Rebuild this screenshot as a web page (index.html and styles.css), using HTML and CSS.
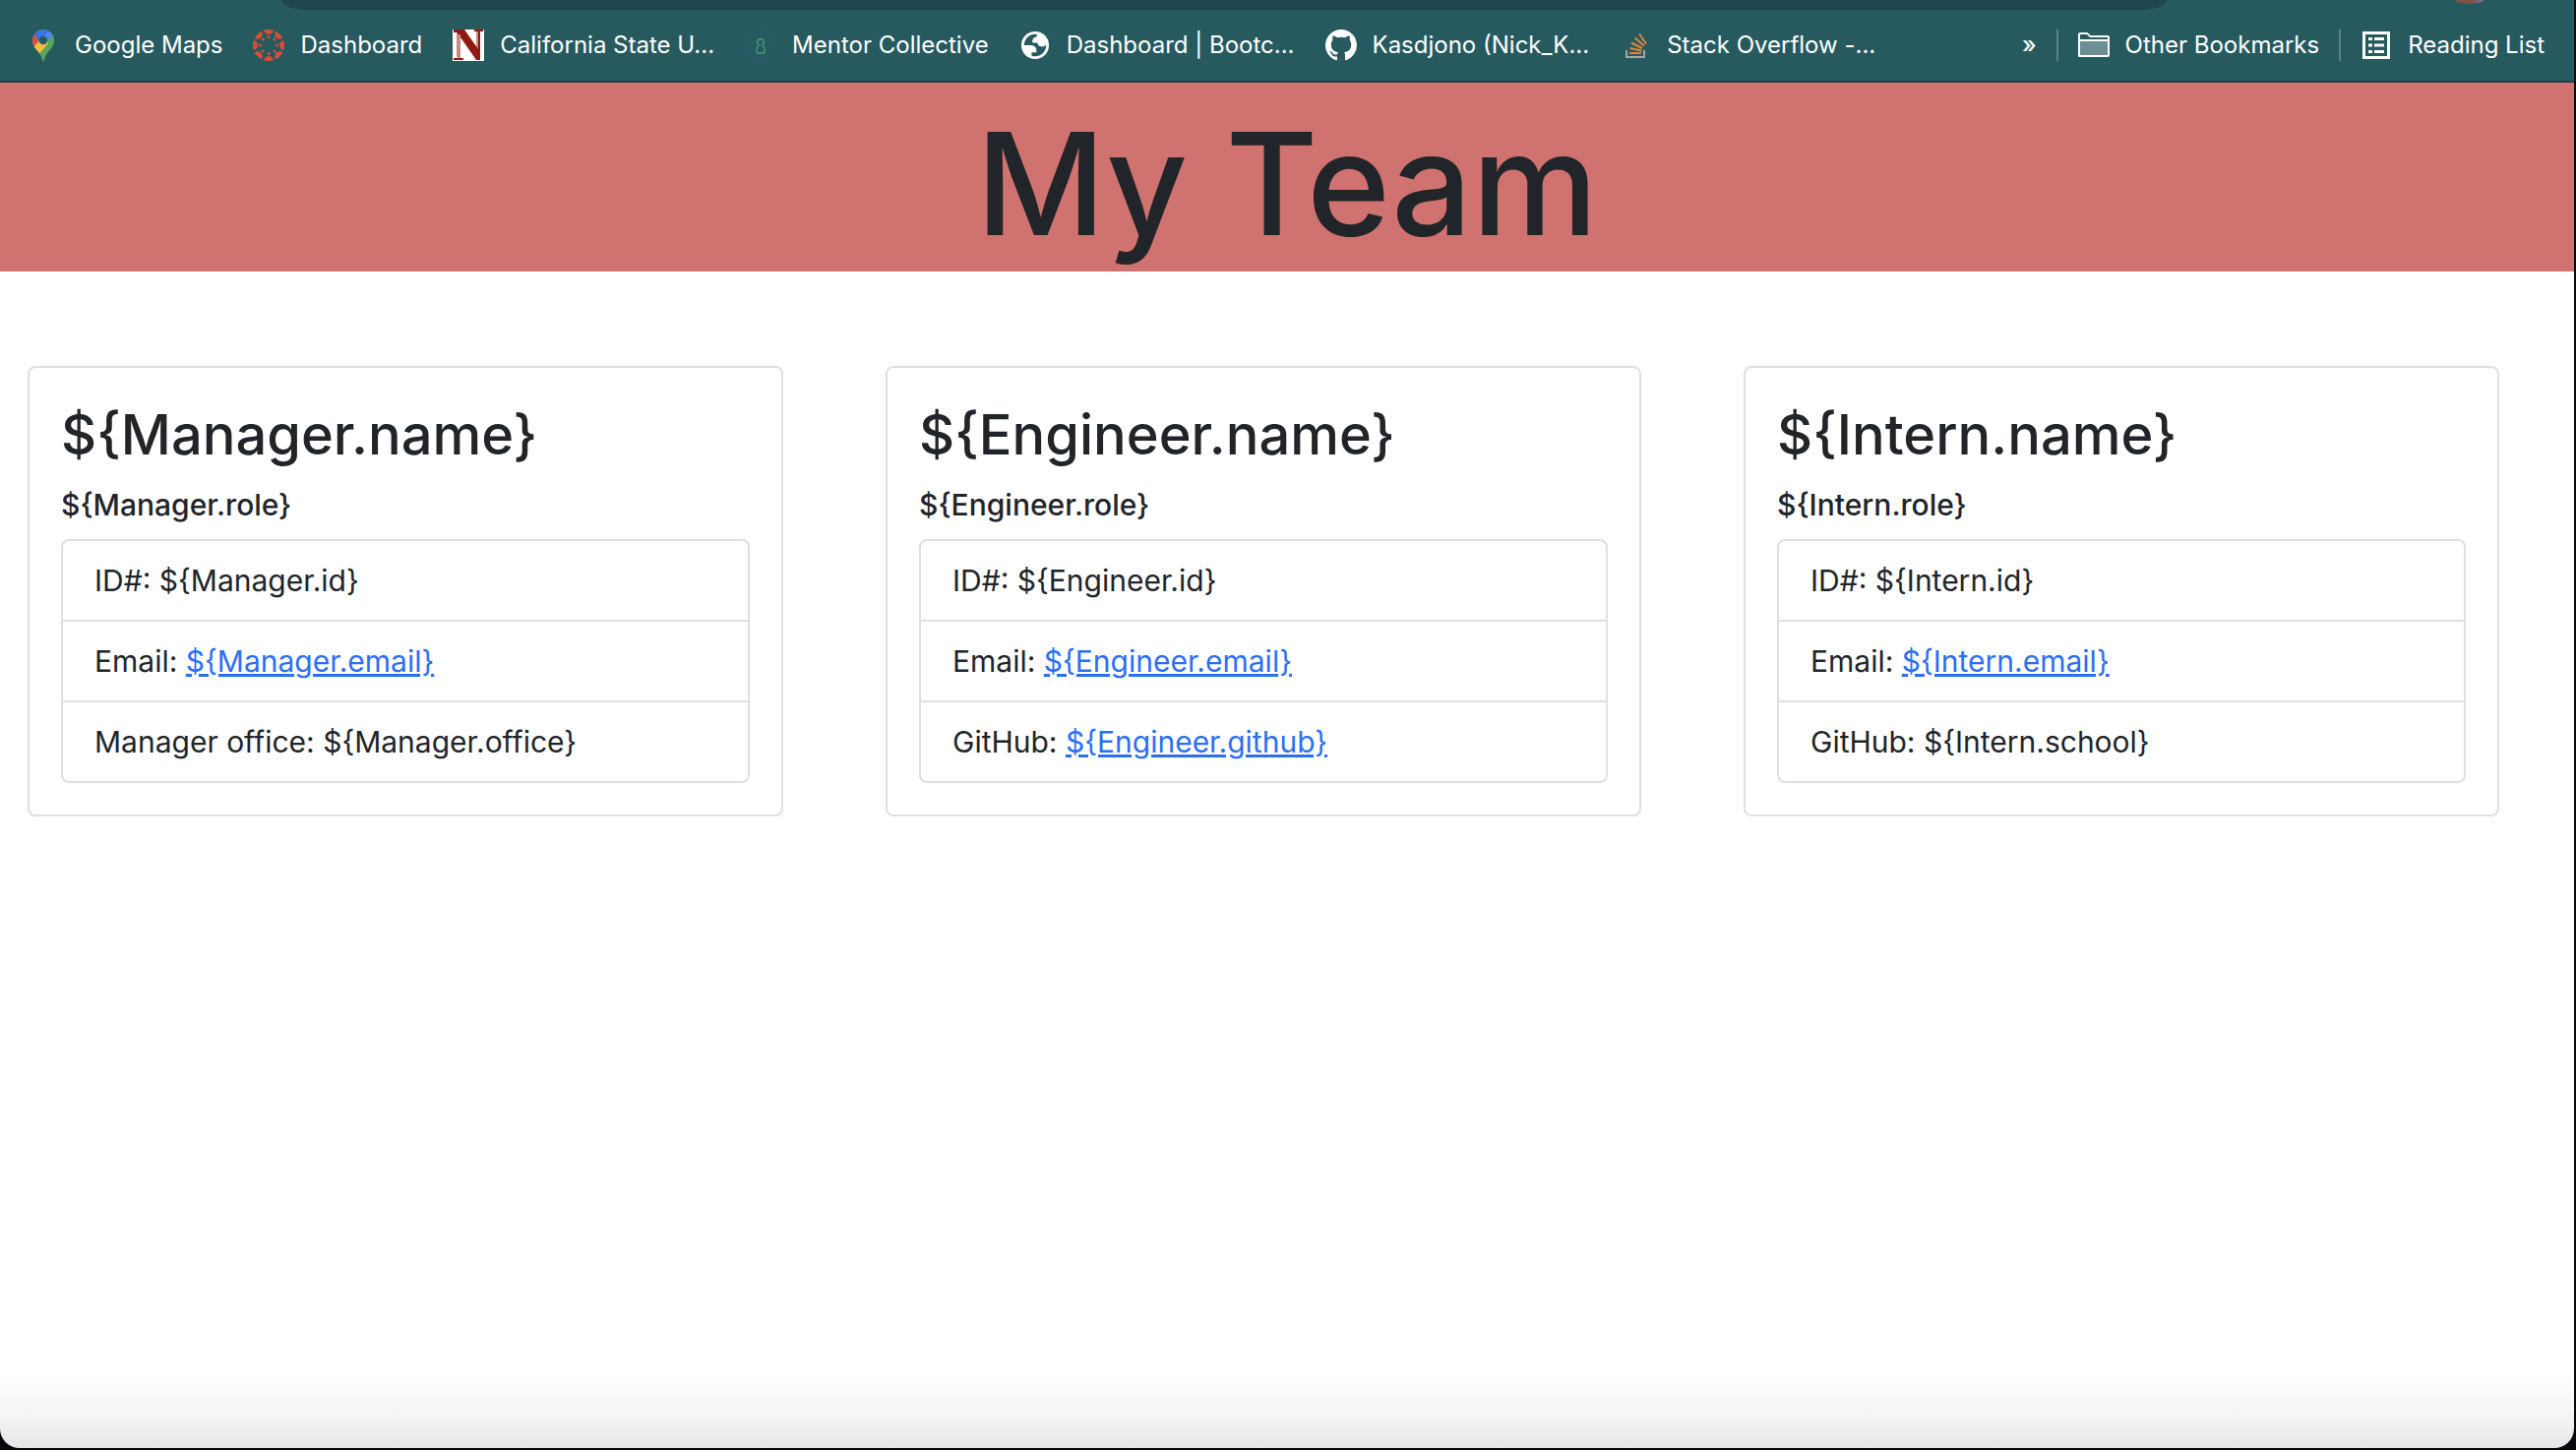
FILE: index.html
```
<!DOCTYPE html>
<html lang="en">
<head>
<meta charset="utf-8">
<meta name="viewport" content="width=device-width, initial-scale=1">
<title>My Team</title>
<link rel="stylesheet" href="styles.css">
</head>
<body>
<div class="window">
  <div class="toolbar">
    <div class="address-row">
      <div class="address-bar"></div>
      <div class="avatar"></div>
    </div>
    <nav class="bookmarks" aria-label="Bookmarks">
      <a class="bookmark" href="#">
        <svg class="icon" viewBox="0 0 32 32" aria-hidden="true">
          <clipPath id="pin"><path d="M16 0C9.800 0 5 5 5 11c0 6 4 9 7 13 2 2.500 2.500 5 3 7q1 2 2 0c.5-2 1-4.500 3-7 3-4 7-7 7-13C27 5 22.200 0 16 0z"/></clipPath>
          <g clip-path="url(#pin)"><path fill="#58a55c" d="M0 0h32v32H0z"/><path fill="#f2bd42" d="M3 20 16 5l5 9-10 12z"/><path fill="#d85140" d="M3 3h6l5 6L4 20z"/><path fill="#3871e0" d="M6 4 16 0l8 1-11 13z"/><path fill="#5186ec" d="M22 0 12 14l6-1 10-8z"/></g>
          <circle cx="16" cy="11" r="4.200" fill="#265a5f"/>
        </svg>
        <span>Google Maps</span>
      </a>
      <a class="bookmark" href="#">
        <svg class="icon" viewBox="0 0 32 32" aria-hidden="true">
          <clipPath id="disc"><circle cx="16" cy="16" r="16"/></clipPath>
          <g fill="#d64e36" clip-path="url(#disc)"><circle cx="16" cy="0" r="5"/><circle cx="27.300" cy="4.700" r="5"/><circle cx="32" cy="16" r="5"/><circle cx="27.300" cy="27.300" r="5"/><circle cx="16" cy="32" r="5"/><circle cx="4.700" cy="27.300" r="5"/><circle cx="0" cy="16" r="5"/><circle cx="4.700" cy="4.700" r="5"/></g>
          <g fill="#d64e36"><circle cx="16" cy="7.500" r="1.500"/><circle cx="22" cy="10" r="1.500"/><circle cx="24.500" cy="16" r="1.500"/><circle cx="22" cy="22" r="1.500"/><circle cx="16" cy="24.500" r="1.500"/><circle cx="10" cy="22" r="1.500"/><circle cx="7.500" cy="16" r="1.500"/><circle cx="10" cy="10" r="1.500"/></g>
        </svg>
        <span>Dashboard</span>
      </a>
      <a class="bookmark" href="#">
        <svg class="icon" viewBox="0 0 32 32" aria-hidden="true">
          <path fill="#fff" d="M0 0h32v32H0z"/><path fill="#c98a84" d="M4 2h4v26H4zM24 2h4v28h-4z"/><path fill="#8d1b12" d="M1 0h11l14 20V2h-4V0h9v2h-3v29h-4L8 8v21h3v2H1v-2h4V3H1z"/><path fill="#c98a84" d="M5 5h3v24H5z"/>
        </svg>
        <span>California State U...</span>
      </a>
      <a class="bookmark" href="#">
        <svg class="icon" viewBox="0 0 32 32" aria-hidden="true" fill="none">
          <circle cx="16" cy="16" r="14.500" stroke="#2c5480" stroke-width="1"/><path stroke="#3f9a78" stroke-width="1.500" d="M14.500 16c-3-2-2-6.500 1.500-6.500s4.500 4.500 1.500 6.500c3 2 3 5 2 8h-7c-1-3-1-6 2-8z"/>
        </svg>
        <span>Mentor Collective</span>
      </a>
      <a class="bookmark" href="#">
        <svg class="icon" viewBox="0.600 0.600 22.800 22.800" aria-hidden="true">
          <circle cx="12" cy="12" r="10" fill="#fff"/><path fill="#265a5f" d="M4 12h4.400c3.407.022 4.922 1.730 4.543 5.127H9.488v2.470a8.004 8.004 0 0 0 10.498-8.080C19.327 12.506 18.332 13 17 13c-2.137 0-3.206-.916-3.206-2.750h-3.748c-.274-2.728.683-4.092 2.870-4.092 0-.975.327-1.597.811-1.970A8.004 8.004 0 0 0 4 12z"/>
        </svg>
        <span>Dashboard | Bootc...</span>
      </a>
      <a class="bookmark" href="#">
        <svg class="icon" viewBox="0 0 16 16" aria-hidden="true"><path fill="#fff" d="M8 0C3.580 0 0 3.580 0 8c0 3.540 2.290 6.530 5.470 7.590.4.070.55-.17.55-.38 0-.19-.01-.82-.01-1.490-2.010.37-2.530-.49-2.690-.94-.09-.23-.48-.94-.82-1.130-.28-.15-.68-.52-.01-.53.63-.01 1.080.58 1.230.82.72 1.210 1.870.87 2.330.66.07-.52.28-.87.51-1.070-1.780-.2-3.640-.89-3.640-3.950 0-.87.31-1.590.82-2.150-.08-.2-.36-1.020.08-2.120 0 0 .67-.21 2.200.82.64-.18 1.320-.27 2-.27s1.360.09 2 .27c1.530-1.040 2.200-.82 2.200-.82.44 1.100.16 1.920.08 2.120.51.56.82 1.270.82 2.150 0 3.070-1.870 3.750-3.650 3.950.29.25.54.73.54 1.480 0 1.070-.01 1.930-.01 2.200 0 .21.15.46.55.38A8.010 8.010 0 0 0 16 8c0-4.420-3.580-8-8-8z"/></svg>
        <span>Kasdjono (Nick_K...</span>
      </a>
      <a class="bookmark" href="#">
        <svg class="icon" viewBox="0 0 32 32" aria-hidden="true" fill="none">
          <path stroke="#a5a8ad" stroke-width="2" d="M7 21v7h18v-7"/><path stroke="#e0853d" stroke-width="2" d="M10 24h12M10.500 19l12 2.500M12 13.500l11 5.500M15.500 8.500l9.500 8M20 4.500l7 10"/>
        </svg>
        <span>Stack Overflow -...</span>
      </a>
      <div class="bookmarks-end">
        <button class="more" type="button" aria-label="More bookmarks"><span>»</span></button>
        <a class="bookmark side" href="#">
          <svg class="icon" viewBox="0 0 32 32" aria-hidden="true">
            <path fill="#6c8f94" stroke="#fff" stroke-width="2" stroke-linejoin="round" d="M1 27V5q0-1 1-1h7l3 3h18q1 0 1 1v18q0 1-1 1z"/><path fill="#265a5f" d="M2 5h7l3 3h18v2H2z"/><path fill="#fff" d="M1 10h30v2H1z"/>
          </svg>
          <span>Other Bookmarks</span>
        </a>
        <a class="bookmark side" href="#">
          <svg class="icon" viewBox="0 0 32 32" aria-hidden="true">
            <path fill="none" stroke="#fff" stroke-width="3" d="M3.500 3.500h25v25h-25z"/><path fill="#fff" d="M8 8h4v3H8zM14 8h10v3H14zM8 14.500h4v3H8zM14 14.500h10v3H14zM8 21h4v3H8zM14 21h10v3H14z"/>
          </svg>
          <span>Reading List</span>
        </a>
      </div>
    </nav>
  </div>

  <header class="banner"><h1>My Team</h1></header>

  <main class="team">
    <section class="card">
      <h2>${Manager.name}</h2>
      <h3>${Manager.role}</h3>
      <ul class="details">
        <li>ID#: ${Manager.id}</li>
        <li>Email: <a href="#">${Manager.email}</a></li>
        <li>Manager office: ${Manager.office}</li>
      </ul>
    </section>
    <section class="card">
      <h2>${Engineer.name}</h2>
      <h3>${Engineer.role}</h3>
      <ul class="details">
        <li>ID#: ${Engineer.id}</li>
        <li>Email: <a href="#">${Engineer.email}</a></li>
        <li>GitHub: <a href="#">${Engineer.github}</a></li>
      </ul>
    </section>
    <section class="card">
      <h2>${Intern.name}</h2>
      <h3>${Intern.role}</h3>
      <ul class="details">
        <li>ID#: ${Intern.id}</li>
        <li>Email: <a href="#">${Intern.email}</a></li>
        <li>GitHub: ${Intern.school}</li>
      </ul>
    </section>
  </main>
</div>
</body>
</html>
```
FILE: styles.css
```
* { box-sizing: border-box; }

body {
  margin: 0;
  padding: 0 2px 2px 0;
  min-height: 100vh;
  display: flex;
  background: #08090c;
  color: #212529;
  font-family: Inter, "Liberation Sans", sans-serif;
  font-size: 30px;
  line-height: 48px;
}

h1, h2, h3, ul { margin: 0; padding: 0; font-weight: 500; }

.window {
  flex: 1;
  min-width: 0;
  border-radius: 0 0 20px 20px;
  overflow: hidden;
  background: linear-gradient(to top, #e6e6e6, #f4f4f4 30px, #fff 76px);
}

/* Browser chrome */
.toolbar {
  height: 84px;
  background: #265a5f;
  border-bottom: 2px solid #1b4046;
}

.address-row {
  display: flex;
  height: 10px;
  padding: 0 92px 0 286px;
}

.address-bar {
  flex: 1;
  margin-right: 294px;
  border-radius: 0 0 24px 24px / 0 0 10px 10px;
  background: #20464d;
}

.avatar {
  width: 28px;
  height: 4px;
  border-radius: 0 0 14px 14px / 0 0 4px 4px;
  background: linear-gradient(to right, #7d5048 60%, #77709f);
}

.bookmarks {
  display: flex;
  align-items: center;
  gap: 31px;
  height: 72px;
  padding: 0 30px 0 28px;
  font-size: 24px;
  line-height: 32px;
  white-space: nowrap;
}

.bookmark {
  display: flex;
  align-items: center;
  gap: 16px;
  color: #fff;
  text-decoration: none;
}

.icon { flex: none; width: 32px; height: 32px; }

.bookmarks-end {
  display: flex;
  align-items: center;
  gap: 20px;
  margin-left: auto;
}

.more {
  padding: 0;
  border: 0;
  background: none;
  color: #fff;
  font: inherit;
  font-weight: 500;
}

.side { padding-left: 20px; border-left: 2px solid #5c8387; }

/* Page */
.banner {
  padding-top: 14px;
  background: #d0726f;
  text-align: center;
}

.banner h1 { font-size: 144px; line-height: 178px; }

.team {
  display: grid;
  grid-template-columns: repeat(3, 1fr);
  padding-top: 96px;
}

.card {
  margin: 0 76px 0 28px;
  padding: 32px;
  border: 2px solid #dfdfdf;
  border-radius: 8px;
  background: #fff;
}

.card h2 { margin-bottom: 16px; font-size: 56px; line-height: 72px; }

.card h3 { margin-bottom: 16px; font-size: 30px; line-height: 38px; }

.details {
  border: 2px solid #dfdfdf;
  border-radius: 8px;
  list-style: none;
  font-weight: 400;
}

.details li { padding: 16px 32px; }

.details li + li { border-top: 2px solid #dfdfdf; }

.details a { color: #2b6ff5; }
```
